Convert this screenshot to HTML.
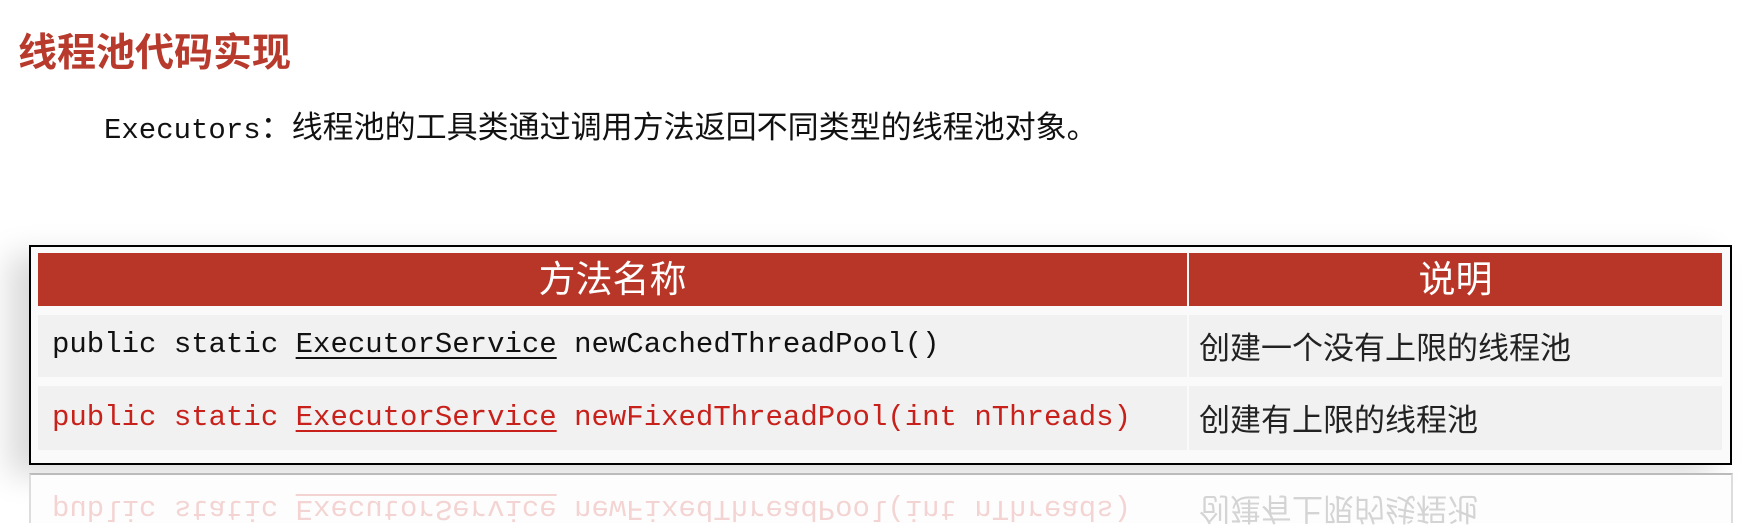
<!DOCTYPE html>
<html><head><meta charset="utf-8"><style>
body{margin:0;width:1756px;height:521px;background:#fff;overflow:hidden;position:relative;font-family:"Liberation Sans","Noto Sans CJK SC",sans-serif}
.t{position:absolute;left:18px;top:22px;font-size:39px;font-weight:bold;color:#b83a2c}
.s{position:absolute;left:104px;top:102px;font-size:31px;color:#111}
.s span{font-family:"Liberation Mono",monospace;font-size:29px}
.box{position:absolute;left:29px;top:245px;width:1699px;height:216px;border:2.5px solid #000;background:#fafafa;box-shadow:-20px 10px 30px rgba(0,0,0,.15)}
.c{position:absolute;box-sizing:border-box}
.h{background:#b83627;color:#fff;font-size:37px;text-align:center;line-height:53px;top:253px;height:53px}
.r{background:#f1f1f1}
.m{font-family:"Liberation Mono",monospace;font-size:29px;padding-left:14px}
.d{font-size:31px;padding-left:10px;color:#222}
u{text-decoration-thickness:2px;text-underline-offset:5px}
.f{position:absolute;top:482px;height:40px;overflow:hidden;transform:scaleY(-1);opacity:.18;line-height:40px}
</style></head><body>
<div class="t">线程池代码实现</div>
<div class="s"><span>Executors</span>：线程池的工具类通过调用方法返回不同类型的线程池对象。</div>
<div class="box"></div>
<div class="c h" style="left:38px;width:1149px">方法名称</div>
<div class="c h" style="left:1189px;width:533px">说明</div>
<div class="c r m" style="left:38px;width:1149px;top:315px;height:62px;line-height:60px;color:#111">public static <u>ExecutorService</u> newCachedThreadPool()</div>
<div class="c r d" style="left:1189px;width:533px;top:315px;height:62px;line-height:68px">创建一个没有上限的线程池</div>
<div class="c r m" style="left:38px;width:1149px;top:386px;height:64px;line-height:64px;color:#c8201a">public static <u>ExecutorService</u> newFixedThreadPool(int nThreads)</div>
<div class="c r d" style="left:1189px;width:533px;top:386px;height:64px;line-height:70px">创建有上限的线程池</div>
<div class="c" style="left:29px;top:473px;width:1704px;height:50px;border-top:2px solid #bbb;border-left:2px solid #ddd;border-right:2px solid #ddd;background:#fdfdfd"></div>
<div class="c m f" style="left:38px;width:1149px;color:#c8201a;top:488px">public static <u>ExecutorService</u> newFixedThreadPool(int nThreads)</div>
<div class="c d f" style="left:1189px;width:533px;top:488px">创建有上限的线程池</div>
</body></html>
